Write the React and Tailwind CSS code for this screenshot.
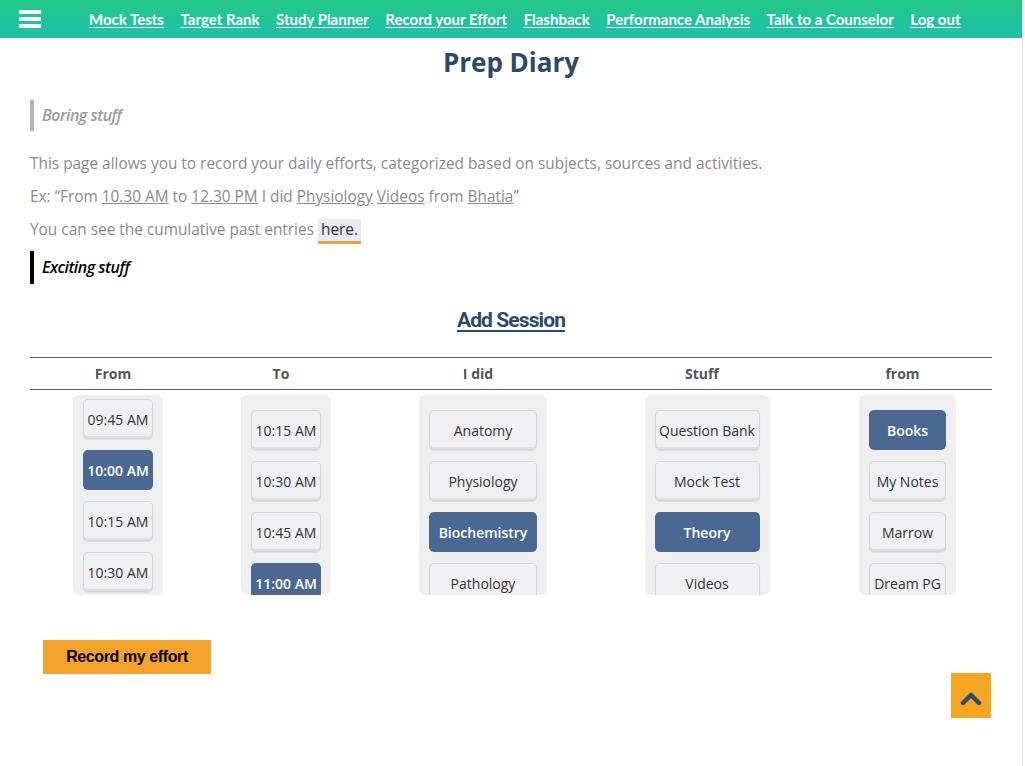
import React from 'react';

const navLinks = ['Mock Tests', 'Target Rank', 'Study Planner', 'Record your Effort', 'Flashback', 'Performance Analysis', 'Talk to a Counselor', 'Log out'];

const columns = [
  { title: 'From', btnW: 'w-[70px]', pt: 'pt-[4px]', items: ['09:45 AM', '10:00 AM', '10:15 AM', '10:30 AM'], active: '10:00 AM' },
  { title: 'To', btnW: 'w-[70px]', pt: 'pt-[15px]', items: ['10:15 AM', '10:30 AM', '10:45 AM', '11:00 AM'], active: '11:00 AM' },
  { title: 'I did', btnW: 'w-[108px]', pt: 'pt-[15px]', items: ['Anatomy', 'Physiology', 'Biochemistry', 'Pathology'], active: 'Biochemistry' },
  { title: 'Stuff', btnW: 'w-[105px]', pt: 'pt-[15px]', items: ['Question Bank', 'Mock Test', 'Theory', 'Videos'], active: 'Theory' },
  { title: 'from', btnW: 'w-[77px]', pt: 'pt-[15px]', items: ['Books', 'My Notes', 'Marrow', 'Dream PG'], active: 'Books' },
];

const OptionList = ({ col }) => (
  <div className={`h-[200px] overflow-hidden rounded-[6px] bg-[#efefef] px-[10px] ${col.pt} flex flex-col gap-[11px]`}>
    {col.items.map((item) => {
      const on = item === col.active;
      return (
        <div
          key={item}
          className={
            on
              ? `${col.btnW} h-[40px] shrink-0 rounded-[5px] bg-[#4a6892] text-white font-semibold text-[14px] flex items-center justify-center`
              : `${col.btnW} h-[40px] shrink-0 rounded-[5px] bg-[#eff0f2] border border-[#d3d6dc] shadow-[inset_0_-2px_0_rgba(0,0,0,0.07),0_1px_1px_rgba(0,0,0,0.08)] text-[#333] text-[14px] flex items-center justify-center whitespace-nowrap`
          }
        >
          {item}
        </div>
      );
    })}
  </div>
);

export default function App() {
  return (
    <div className="w-[1023px] min-h-[766px] border-r border-[#e3e3e3] bg-white font-['Open_Sans',sans-serif] relative">
      {/* Top nav */}
      <header className="h-[38px] bg-gradient-to-b from-[#23c884] to-[#1fc1aa] flex items-center">
        <div className="ml-[19px] w-[22px] flex flex-col gap-[3px]">
          <span className="h-[4px] bg-white block" />
          <span className="h-[4px] bg-white block" />
          <span className="h-[4px] bg-white block" />
        </div>
        <nav className="ml-[48px] flex items-center gap-[16.5px]">
          {navLinks.map((l) => (
            <a key={l} className="text-white font-['Lato',sans-serif] font-bold text-[15px] underline underline-offset-2 whitespace-nowrap cursor-pointer">
              {l}
            </a>
          ))}
        </nav>
      </header>

      <main className="px-[30px]">
        <h1 className="mt-[8px] text-center text-[26px] leading-[32px] font-bold text-[#2c4a6c]">Prep Diary</h1>

        <div className="mt-[22px] h-[31px] border-l-4 border-[#b3b3b3] pl-[8px] flex items-center">
          <span className="italic font-semibold text-[16px] leading-[20px] -mt-[2px] text-[#9b9b9b] tracking-[-0.5px]">Boring stuff</span>
        </div>

        <div className="mt-[16px] text-[15.4px] leading-[33px] text-[#8a8a8a]">
          <p>This page allows you to record your daily efforts, categorized based on subjects, sources and activities.</p>
          <p>
            Ex: “From <u>10.30 AM</u> to <u>12.30 PM</u> I did <u>Physiology</u> <u>Videos</u> from <u>Bhatia</u>”
          </p>
          <p>
            You can see the cumulative past entries{' '}
            <span className="bg-[#e6eaf4] text-[#333] px-[3px] border-b-[3px] border-[#e8a33b] leading-[22px] inline-block">here.</span>
          </p>
        </div>

        <div className="mt-[5px] h-[33px] border-l-4 border-black pl-[8px] flex items-center">
          <span className="italic font-semibold text-[16px] leading-[20px] -mt-[2px] text-black tracking-[-0.5px]">Exciting stuff</span>
        </div>

        <h2 className="mt-[22px] text-center">
          <span className="font-['Roboto',sans-serif] font-bold text-[21px] leading-[28px] text-[#2c4a6c] underline underline-offset-[3px] tracking-[-0.9px]">
            Add Session
          </span>
        </h2>

        <div className="mt-[23px]">
          <div className="grid grid-cols-[166px_170px_224px_224px_177px] border-t border-b border-[#666] h-[33px] items-center">
            {columns.map((c) => (
              <div key={c.title} className="text-center text-[14px] font-bold text-[#555]">{c.title}</div>
            ))}
          </div>
          <div className="grid grid-cols-[166px_170px_224px_224px_177px] mt-[5px]">
            {columns.map((c) => (
              <div key={c.title} className="pl-[10px] flex justify-center">
                <OptionList col={c} />
              </div>
            ))}
          </div>
        </div>

        <button className="mt-[45px] ml-[13px] w-[168px] h-[34px] bg-[#f4a22a] text-black font-['Liberation_Sans',Arial,sans-serif] font-bold text-[16px] tracking-[-0.4px]">
          Record my effort
        </button>
      </main>

      <button className="fixed right-[34px] bottom-[48px] w-[40px] h-[45px] bg-[#f5a623] flex items-center justify-center">
        <svg width="24" height="16" viewBox="0 0 24 16" className="mt-[4px]">
          <path d="M4 13 L12 5 L20 13" fill="none" stroke="#2c4a6c" strokeWidth="4.5" strokeLinecap="round" strokeLinejoin="round" />
        </svg>
      </button>
    </div>
  );
}
